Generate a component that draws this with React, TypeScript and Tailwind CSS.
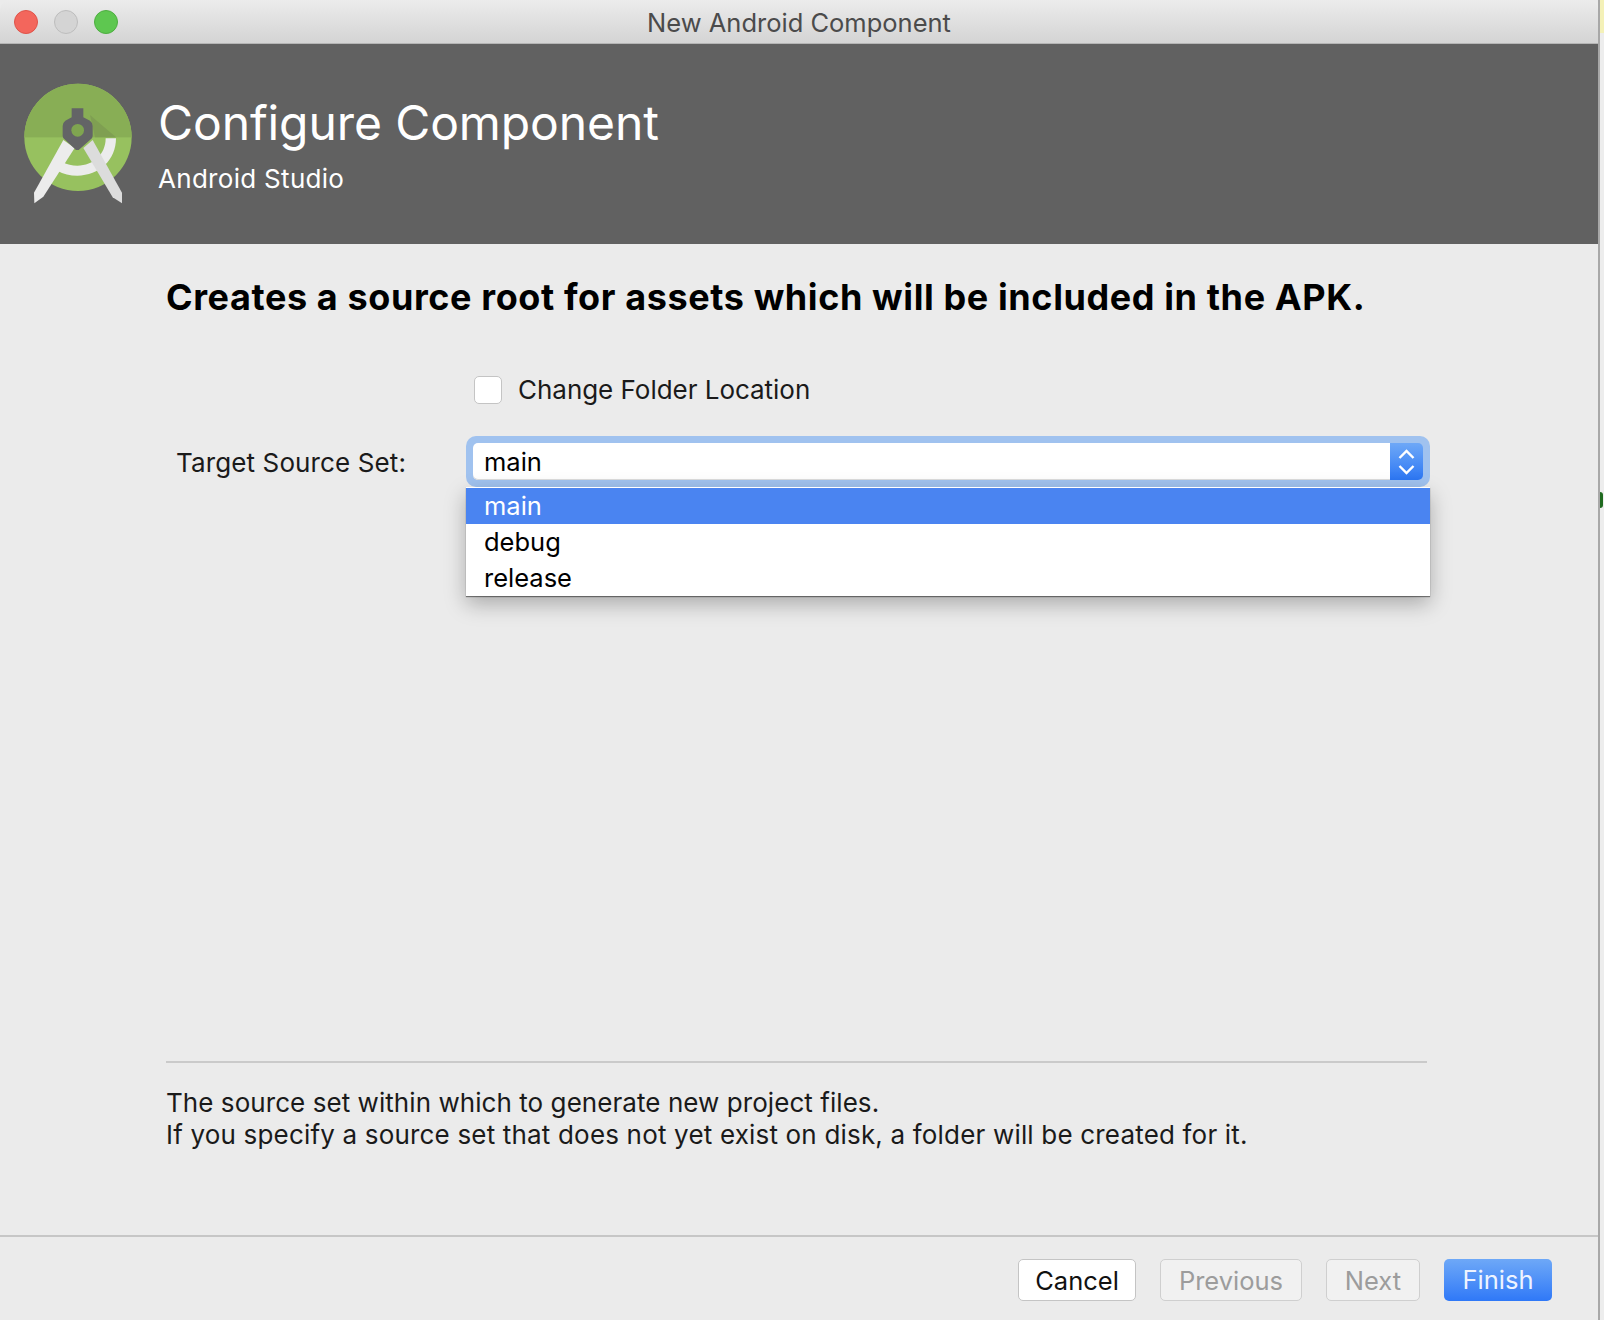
import React from "react";

function Logo() {
  return (
    <svg width="120" height="130" viewBox="60 240 360 390" className="shrink-0">
      <defs>
        <clipPath id="c"><circle cx="234" cy="412" r="161" /></clipPath>
      </defs>
      <circle cx="234" cy="412" r="161" fill="#97c15f" />
      <g clipPath="url(#c)">
        <rect x="60" y="240" width="360" height="172" fill="#88ae55" />
        <polygon points="270,345 348,412 285,412" fill="#7f9f52" />
      </g>
      <path d="M317 415 H348 C348 480 298 527 232 527 C210 527 190 522 172 512 L188 487 C201 494 216 497 232 497 C281 497 317 462 317 415 Z" fill="#ececec" />
      <polygon points="190,420 224,444 130,590 103,610 102,578" fill="#ececec" />
      <polygon points="250,444 278,420 366,578 366,610 338,592" fill="#dcdcdc" />
      <path d="M215 325 H250 V352 L270 362 Q278 368 278 378 V408 Q278 416 270 420 L236 450 H228 L196 420 Q188 416 188 408 V378 Q188 368 196 362 L215 352 Z" fill="#636466" />
      <circle cx="233" cy="391" r="19" fill="#7fa550" />
    </svg>
  );
}

export default function App() {
  const font = "[font-family:Inter,'Liberation_Sans',sans-serif]";
  return (
    <div className={`flex h-[1320px] w-[1604px] overflow-hidden bg-[#ebebeb] text-black ${font}`}>
      <div className="flex h-full w-[1598px] flex-col bg-[#ebebeb]">
        <div className="relative flex h-[44px] shrink-0 items-center justify-center rounded-t-[10px] border-b border-[#b5b5b5] bg-gradient-to-b from-[#ececec] to-[#d4d4d4] pt-[3px]">
          <div className="absolute left-[14px] top-[10px] flex gap-[16px]">
            <span className="h-[24px] w-[24px] rounded-full border border-[#df5349] bg-[#f3665c]" />
            <span className="h-[24px] w-[24px] rounded-full border border-[#bdbdbd] bg-[#d4d4d4]" />
            <span className="h-[24px] w-[24px] rounded-full border border-[#4eae41] bg-[#5ec750]" />
          </div>
          <span className="text-[25.5px] text-[#4b4b4b]">New Android Component</span>
        </div>

        <div className="flex h-[200px] shrink-0 items-center bg-[#616161] pl-[20px] pt-[2px] text-white">
          <Logo />
          <div className="ml-[18px] flex flex-col">
            <div className="text-[48px] leading-[56px] tracking-[-0.1px]">Configure Component</div>
            <div className="mt-[12px] text-[26px] leading-[32px] tracking-[0.3px]">Android Studio</div>
          </div>
        </div>

        <div className="flex flex-1 flex-col pl-[166px] pr-[171px] pt-[30px]">
          <h1 className="whitespace-nowrap text-[36px] font-bold leading-[46px] tracking-[0.6px]">
            Creates a source root for assets which will be included in the APK.
          </h1>
          <div className="mt-[54px] flex items-center pl-[308px]">
            <span className="h-[28px] w-[28px] rounded-[5px] border border-[#c4c4c4] bg-white" />
            <span className="ml-[16px] text-[26px] leading-[32px] tracking-[-0.03px] text-[#1a1a1a]">Change Folder Location</span>
          </div>
          <div className="relative mt-[30px] flex items-center pl-[10px]">
            <span className="w-[290px] shrink-0 pt-[2px] text-[26px] leading-[32px] tracking-[0.12px] text-[#1a1a1a]">Target Source Set:</span>
            <div className="flex h-[51px] w-[964px] shrink-0 rounded-[10px] bg-[#a0c2ef] p-[7px]">
              <div className="flex flex-1 items-center rounded-l-[5px] bg-white pl-[11px] pt-[2px] text-[25.5px] shadow-[inset_0_-1px_0_#dcdcdc]">main</div>
              <div className="flex w-[33px] flex-col items-center justify-center gap-[6px] rounded-r-[5px] bg-gradient-to-b from-[#6ea8f7] to-[#2c76f3]">
                <svg width="17" height="10" viewBox="0 0 17 10"><path d="M1.5 9 L8.5 2 L15.5 9" fill="none" stroke="white" strokeWidth="2.4" /></svg>
                <svg width="17" height="10" viewBox="0 0 17 10"><path d="M1.5 1 L8.5 8 L15.5 1" fill="none" stroke="white" strokeWidth="2.4" /></svg>
              </div>
            </div>
            <div className="absolute left-[300px] top-[51px] w-[964px] bg-white text-[25.5px] shadow-[0_8px_20px_rgba(0,0,0,0.28),0_1px_1px_rgba(0,0,0,0.45)]">
              <div className="mt-[1px] flex h-[36px] items-center bg-[#4a84f1] pl-[18px] text-white">main</div>
              <div className="flex h-[36px] items-center pl-[18px]">debug</div>
              <div className="flex h-[36px] items-center pl-[18px]">release</div>
            </div>
          </div>
          <div className="flex-1" />
          <div className="h-[2px] bg-[#cacaca]" />
          <div className="mb-[84px] mt-[24px] whitespace-nowrap text-[26px] leading-[32px] text-[#1a1a1a]">
            <div className="tracking-[0.06px]">The source set within which to generate new project files.</div>
            <div className="tracking-[0.18px]">If you specify a source set that does not yet exist on disk, a folder will be created for it.</div>
          </div>
        </div>

        <div className="flex h-[85px] shrink-0 items-center justify-end border-t-2 border-[#c6c6c6] pr-[46px] pt-[2px] text-[25.5px]">
          <button className="h-[42px] w-[118px] rounded-[5px] border border-[#c4c4c4] bg-white pt-[2px] text-[#111]">Cancel</button>
          <button className="ml-[24px] h-[42px] w-[142px] rounded-[5px] border border-[#cfcfcf] bg-[#f1f1f1] pt-[2px] text-[#9c9c9c]">Previous</button>
          <button className="ml-[24px] h-[42px] w-[94px] rounded-[5px] border border-[#cfcfcf] bg-[#f1f1f1] pt-[2px] text-[#9c9c9c]">Next</button>
          <button className="ml-[24px] h-[42px] w-[108px] rounded-[5px] bg-gradient-to-b from-[#6ea8f7] to-[#2f78f7] pt-[2px] text-[#eef4ff]">Finish</button>
        </div>
      </div>
      <div className="relative h-full w-[6px] border-l-2 border-[#a8a8a8] bg-[#ededed]">
        <span className="absolute left-0 top-[492px] h-[16px] w-[3px] rounded-r-full bg-[#1f6a1f]" />
        <span className="absolute left-0 top-0 h-[33px] w-[4px] bg-[#f4f1b8]" />
      </div>
    </div>
  );
}
